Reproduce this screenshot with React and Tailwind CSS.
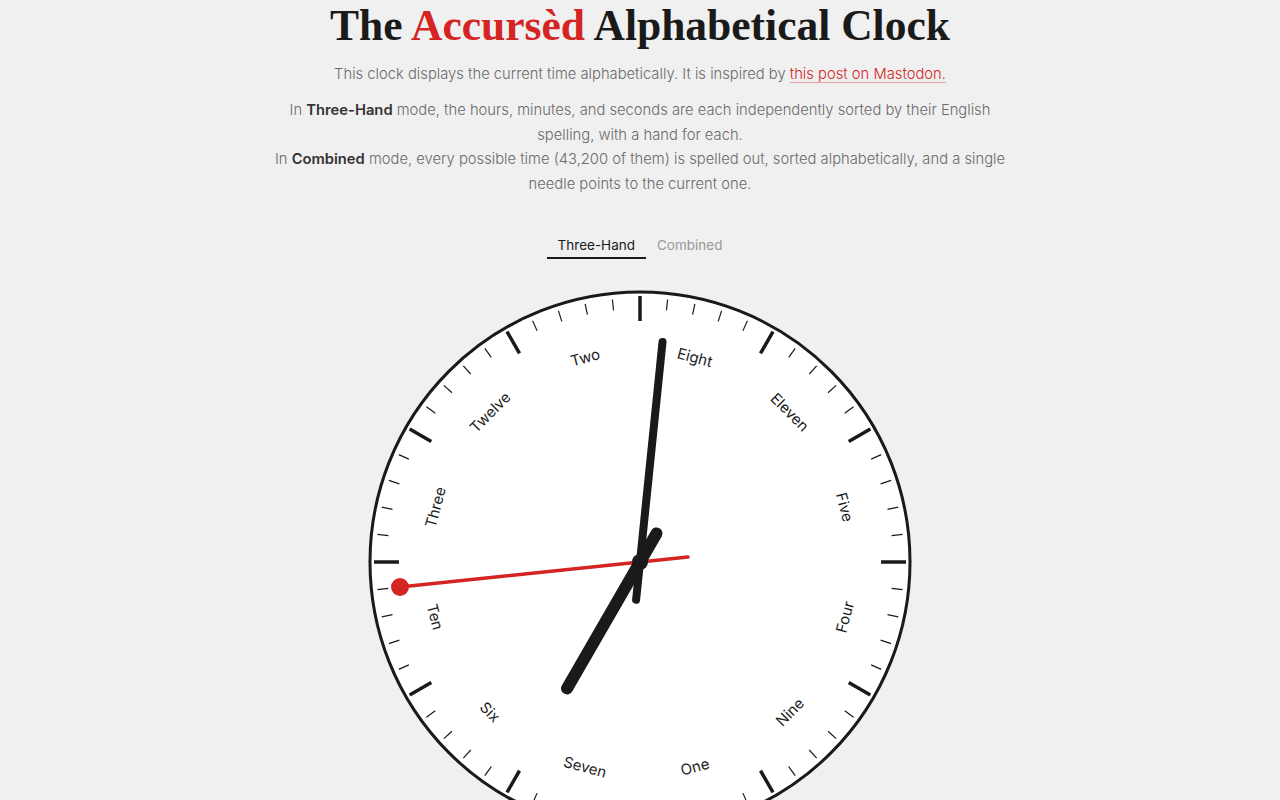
import React from "react";

const LABELS = ["Eight", "Eleven", "Five", "Four", "Nine", "One", "Seven", "Six", "Ten", "Three", "Twelve", "Two"];

function Clock() {
  const ticks = [];
  for (let i = 0; i < 60; i++) {
    const a = (i * 6 * Math.PI) / 180;
    const major = i % 5 === 0;
    const r1 = major ? 241 : 253;
    const r2 = major ? 266 : 264;
    ticks.push(
      <line
        key={i}
        x1={r1 * Math.sin(a)}
        y1={-r1 * Math.cos(a)}
        x2={r2 * Math.sin(a)}
        y2={-r2 * Math.cos(a)}
        stroke="#1a1a1a"
        strokeWidth={major ? 3.5 : 1.2}
      />
    );
  }
  const labels = LABELS.map((t, k) => {
    const deg = 15 + 30 * k;
    const a = (deg * Math.PI) / 180;
    const x = 212 * Math.sin(a);
    const y = -212 * Math.cos(a);
    const rot = deg < 90 || deg > 270 ? deg : deg - 180;
    return (
      <text
        key={t}
        x={x}
        y={y}
        transform={`rotate(${rot} ${x} ${y})`}
        textAnchor="middle"
        dominantBaseline="central"
        fontSize="15"
        fill="#1e1e1e"
        style={{ fontFamily: "Inter, 'Noto Sans', sans-serif" }}
      >
        {t}
      </text>
    );
  });
  return (
    <svg width="550" height="550" viewBox="-275 -275 550 550" className="block shrink-0">
      <circle cx="0" cy="0" r="270" fill="#ffffff" stroke="#1a1a1a" strokeWidth="3" />
      {ticks}
      {labels}
      <line x1="48" y1="-5" x2="-240" y2="25" stroke="#d42424" strokeWidth="3.5" strokeLinecap="round" />
      <circle cx="-240" cy="25" r="9" fill="#d42424" />
      <line x1="-3.9" y1="37.8" x2="22.5" y2="-219.9" stroke="#1a1a1a" strokeWidth="8" strokeLinecap="round" />
      <line x1="16.5" y1="-28.6" x2="-73" y2="126.4" stroke="#1a1a1a" strokeWidth="12" strokeLinecap="round" />
      <circle cx="0" cy="0" r="8" fill="#1a1a1a" />
    </svg>
  );
}

export default function App() {
  return (
    <div className="min-h-screen bg-[#f0f0f0] flex flex-col items-center" style={{ fontFamily: "Inter, 'Noto Sans', sans-serif" }}>
      <h1
        className="text-[43.5px] leading-[50px] font-bold text-[#1a1a1a] m-0"
        style={{ fontFamily: "'Liberation Serif', 'DejaVu Serif', serif" }}
      >
        The <span className="text-[#d42424]">Accursèd</span> Alphabetical Clock
      </h1>
      <p className="mt-[12px] text-[14.75px] leading-[24.4px] font-light text-[#6a6a6a] text-center">
        This clock displays the current time alphabetically. It is inspired by{" "}
        <a className="text-[#d42424] underline decoration-[#e8a0a0] underline-offset-[3px]">this post on Mastodon.</a>
      </p>
      <div className="mt-3 max-w-[740px] text-[14.75px] leading-[24.4px] font-light text-[#6a6a6a] text-center">
        <div>
          In <span className="font-semibold text-[#333]">Three-Hand</span> mode, the hours, minutes, and seconds are each independently sorted by their English spelling, with a hand for each.
        </div>
        <div>
          In <span className="font-semibold text-[#333]">Combined</span> mode, every possible time (43,200 of them) is spelled out, sorted alphabetically, and a single needle points to the current one.
        </div>
      </div>
      <div className="mt-[35px] flex">
        <div className="px-[11px] pt-1 pb-[2px] border-b-2 border-[#1a1a1a] text-[13.5px] leading-5 text-[#1a1a1a]">Three-Hand</div>
        <div className="px-[11px] pt-1 pb-[2px] border-b-2 border-transparent text-[13.5px] leading-5 text-[#999]">Combined</div>
      </div>
      <div className="mt-[28px]">
        <Clock />
      </div>
    </div>
  );
}
